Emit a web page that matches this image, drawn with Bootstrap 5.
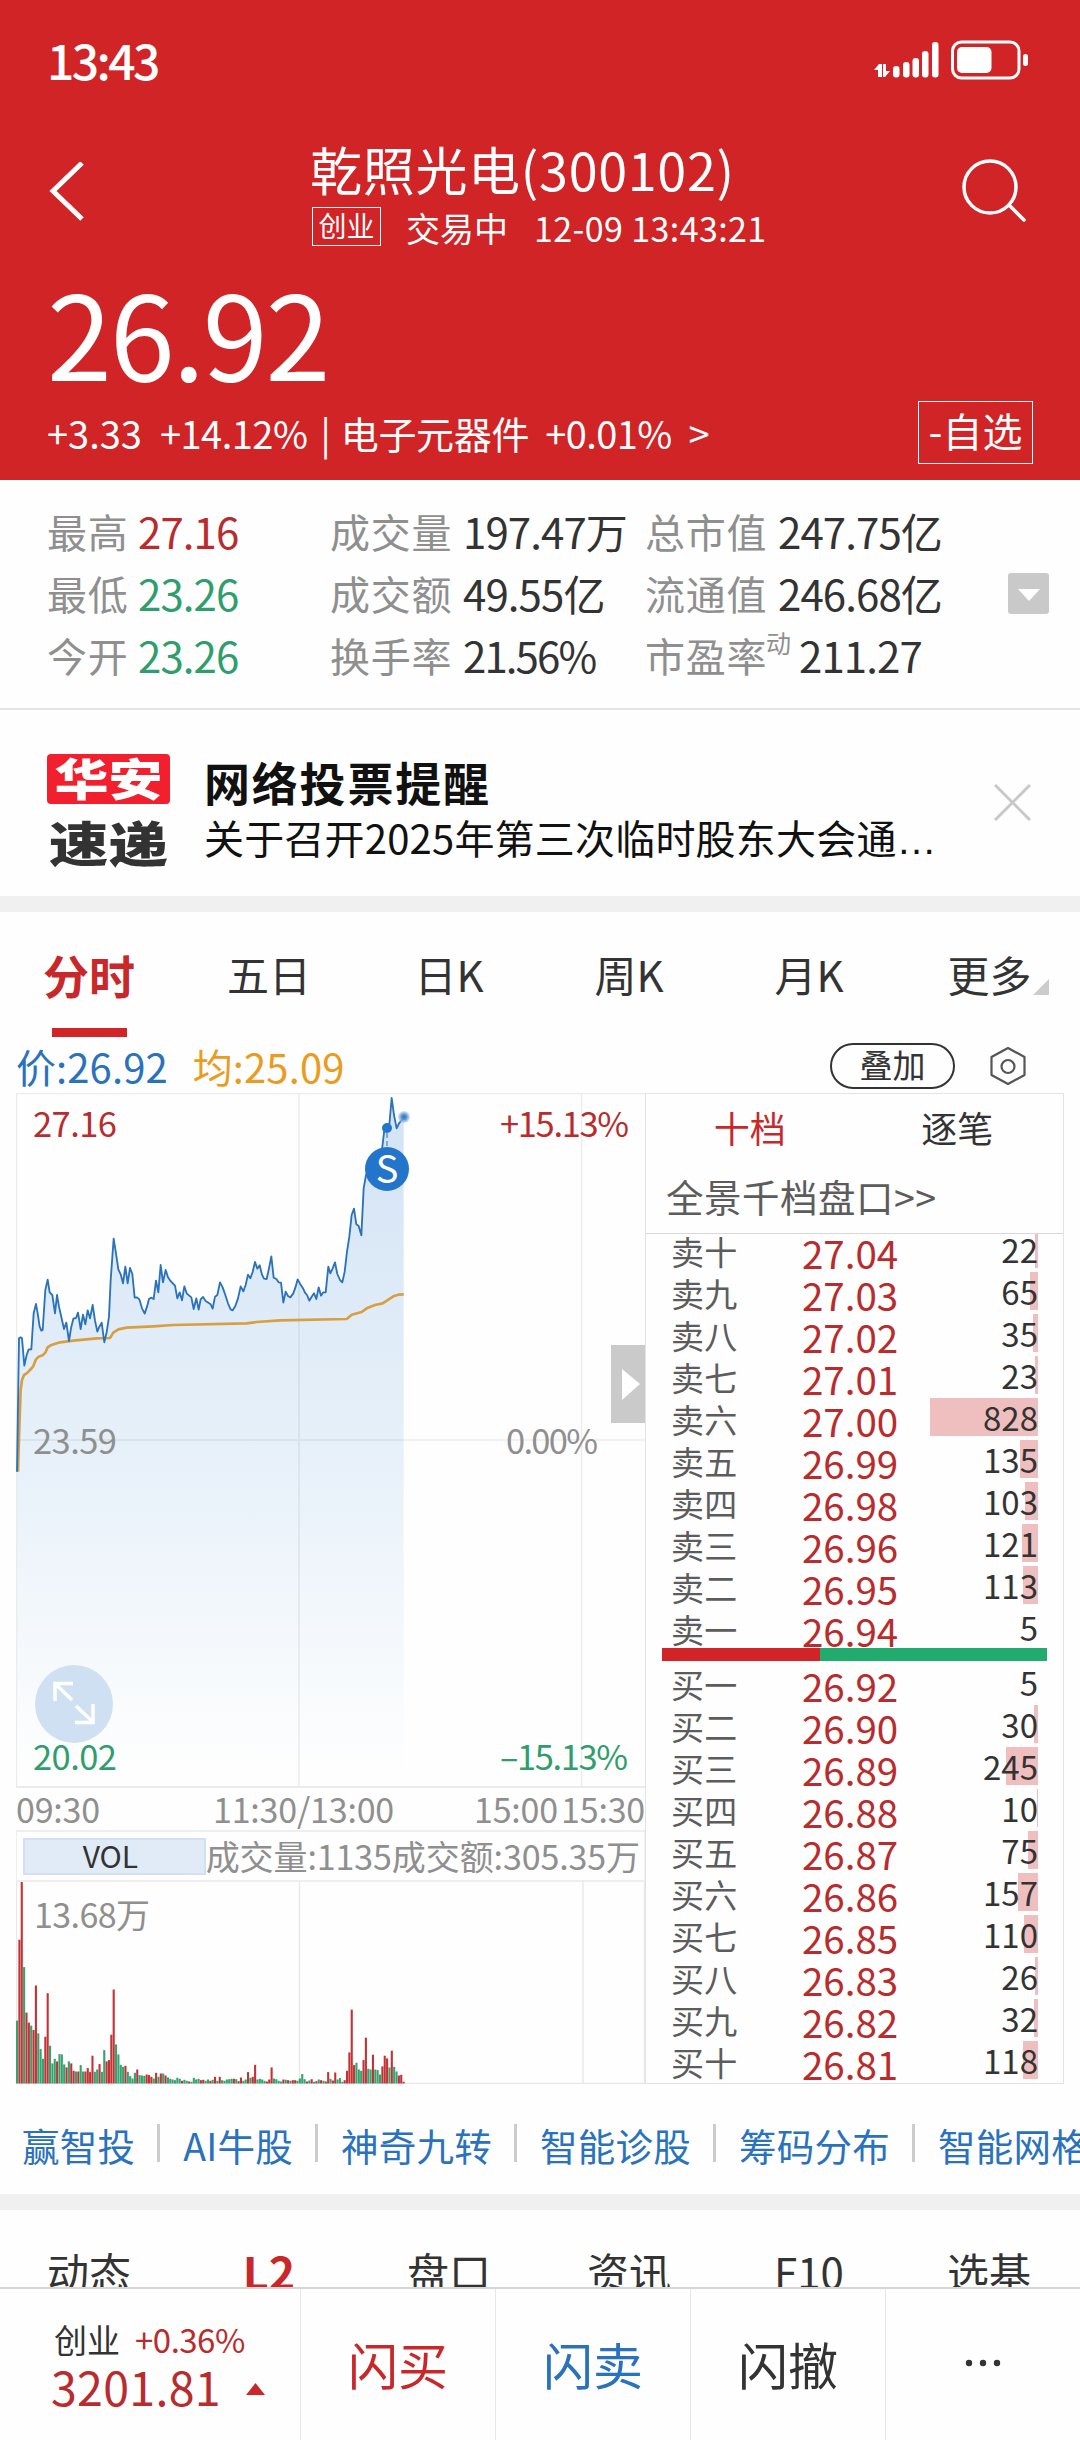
<!DOCTYPE html>
<html lang="zh-CN">
<head>
<meta charset="utf-8">
<meta name="viewport" content="width=device-width, initial-scale=1">
<title>乾照光电(300102)</title>
<link href="https://cdn.jsdelivr.net/npm/bootstrap@5.3.0/dist/css/bootstrap.min.css" rel="stylesheet">
<style>
:root{--up:#b92c2d;--brand:#d02426;--down:#2f9e6c;--ink:#333;--dim:#8f8f8f;--blue:#2a72bb}
body{font-family:"Noto Sans CJK SC",sans-serif;color:var(--ink);background:#fefefe;width:1080px;height:2440px;overflow:hidden;white-space:nowrap;line-height:1}
svg{display:block;flex:none}
svg text{font-family:"Noto Sans CJK SC",sans-serif}
.c-up{color:var(--up)}.c-down{color:var(--down)}.c-dim{color:var(--dim)}.c-blue{color:var(--blue)}.c-brand{color:#c9282b}
.quote-head{background:var(--brand);height:480px}
.status-row{height:116px;padding:1px 51px 0 47px}
.status-time{font-size:48px;letter-spacing:-2.6px;font-weight:500}
.title-row{height:148px;padding:22px 54px 0 48px}
.title-mid{margin-right:33px;margin-left:222px}
.stock-name{font-size:52px;line-height:62px;letter-spacing:.7px}
.stock-sub{font-size:34px;line-height:56px}
.board-tag{border:1.5px solid #fff;width:69px;height:39px;font-size:28px;line-height:34px;text-align:center;margin:7px 25px 0 2px}
.big-price{height:131px;line-height:132px;font-size:117px;letter-spacing:-2.2px;padding-left:47px}
.change-row{height:75px;font-size:38px;padding:0 47px}
.watch-btn{border:1.5px solid #fff;width:115px;height:63px;font-size:40px;line-height:57px;text-align:center;letter-spacing:0}
.stats{height:228px;padding:20px 0 0 47px;font-size:42px;letter-spacing:-.9px}
.stats .line{height:62px}
.stats .lab{font-size:40px;letter-spacing:.7px;color:var(--dim)}
.col-a .lab{width:91px}.col-b .lab,.col-c .lab{width:133px}
.col-a{width:283px}.col-b{width:315px}.col-c{width:363px}
.stats sup{font-size:25px;top:-19px;margin-left:-1px}
.drop-ico{margin-top:73px}
.rule{height:2px;background:#e5e5e5}
.band{height:16px;background:#f0f0f0}
.notice{height:186px;padding:44px 49px 0 47px}
.logo-a{background:#f2202e;color:#fff;width:123px;height:50px;border-radius:4px;line-height:46px}
.logo-b{color:var(--ink);line-height:48px;margin-top:13px}
.logo-a,.logo-b{font-weight:900;font-size:55px;text-align:center;width:123px}
.logo-a span{display:block;transform:scale(.98,.8)}
.logo-b span{display:block;transform:scale(1.08,.86)}
.n-title{font-size:46px;font-weight:700;color:#111;line-height:54px;letter-spacing:1.8px}
.n-text{font-size:40px;color:#111;line-height:54px;letter-spacing:.2px;margin-top:2px}
.n-text i{font-family:"Liberation Sans",sans-serif;font-style:normal}
.period{height:125px;font-size:42px}
.period .item{width:180px;padding-top:32px;padding-right:2px;line-height:60px}
.period .item.on{font-weight:700;font-size:46px;color:#c9282b}
.period .bar{width:75px;height:9px;background:var(--brand)}
.legend-row{height:56px;font-size:40px;padding:1px 53px 0 16px;letter-spacing:.1px}
.pill{width:125px;height:46px;border:2px solid #333;font-size:33px;line-height:39px;text-align:center;margin-right:34px}
.board{height:991px;padding:0 16px}
.left-col{width:629px}
.times{height:44px;font-size:34px;border-bottom:2px solid #eee;letter-spacing:-.2px}
.vol-row{height:50px;font-size:34px;border:1px solid #efefef;border-top:0;border-bottom:2px solid #eee;letter-spacing:-.1px;padding-left:6px}
.vol-chip{width:183px;height:37px;background:#e1ebf8;border:2px solid #d2e0f6;color:#333;font-size:30px;line-height:31px;padding-right:8px}
.handle{right:0;top:252px;width:34px;height:78px;background:#cacaca}
.depth{width:419px;border:1px solid #e3e3e3}
.depth-tabs{height:70px;font-size:36px;padding:0 2px 4px 0}
.depth-link{height:71px;font-size:37.5px;color:#5c5c5c;border-bottom:1px solid #d8d8d8;padding:0 0 0 20px;letter-spacing:.5px;line-height:63px}
.sells{height:416px}
.sells>div:first-child{margin-top:-4px}
.lvl{height:42px;padding:0 25px 0 25px}
.lvl .nm{font-size:33px;color:#5c5c5c;line-height:42px;width:131px;letter-spacing:.3px}
.lvl .px{font-size:38.5px;line-height:45px;color:var(--up)}
.lvl .qt{font-size:33px;line-height:39px;width:120px;height:38px;background:linear-gradient(#efbfc0,#efbfc0) right/var(--w) 100% no-repeat}
.balance{height:13px;margin:0 16px 2px 16px}
.balance-sell{width:158px;background:var(--brand)}.balance-buy{background:#22ab6e}
.tools{height:110px;font-size:37.5px;padding:7px 0 0 22px;letter-spacing:.25px}
.tools span{padding-top:5px}
.tools .sep{width:3px;height:38px;background:#ccc;margin:0 23px 0 22px;flex:none}
.sections{height:77px;font-size:42px}
.sections .item{width:180px;line-height:60px;padding-top:31px;padding-right:2px}
.sections .on{font-weight:700;font-size:45px;color:#c9282b}
.dock{height:153px;border-top:2px solid #d6d6d6;background:#fefefe;position:relative}
.dock .act{width:195px;border-left:1px solid #e6e6e6;font-size:50px;padding-bottom:4px}
.idx{width:300px;padding:30px 0 0 54px}
</style>
<script src="https://cdn.jsdelivr.net/npm/bootstrap@5.3.0/dist/js/bootstrap.bundle.min.js"></script>
</head>
<body>
<header class="quote-head text-white">
  <div class="status-row d-flex justify-content-between align-items-center">
    <span class="status-time">13:43</span>
    <svg width="156" height="42" viewBox="0 0 156 42" fill="#fff">
      <path d="M1 32l5-6h3v13H5v-7zM10 26h3v7h4l-5 6h-2z"/>
      <rect x="20" y="28" width="6.500" height="11.500" rx="3"/><rect x="30" y="24" width="6.500" height="15.500" rx="3"/><rect x="39.500" y="20" width="6.500" height="19.500" rx="3"/><rect x="49" y="13" width="6.500" height="26.500" rx="3"/><rect x="59" y="4" width="6.500" height="35.500" rx="3"/>
      <rect x="79.500" y="4" width="66.500" height="36" rx="9" fill="none" stroke="#fff" stroke-width="3"/>
      <rect x="84" y="9" width="34.500" height="26" rx="5"/><rect x="150" y="16" width="5" height="12" rx="2.500"/>
    </svg>
  </div>
  <div class="title-row d-flex align-items-start">
    <svg class="mt-4" width="40" height="60" viewBox="0 0 40 60" fill="none" stroke="#fff" stroke-width="5"><path d="M34 1L5 29l29 28"/></svg>
    <div class="title-mid">
      <div class="stock-name">乾照光电(300102)</div>
      <div class="stock-sub d-flex"><span class="board-tag">创业</span><span>交易中</span><span style="margin-left:26px;letter-spacing:.4px">12-09 13:43:21</span></div>
    </div>
    <svg class="ms-auto" style="margin-top:21px" width="66" height="66" viewBox="0 0 66 66" fill="none" stroke="#fff" stroke-width="3.500" stroke-linecap="round"><circle cx="30" cy="28" r="26"/><path d="M49 46l15 15"/></svg>
  </div>
  <div class="big-price">26.92</div>
  <div class="change-row d-flex justify-content-between align-items-center">
    <div class="d-flex"><span>+3.33</span><span style="margin-left:18px;letter-spacing:-.5px">+14.12%</span><span style="margin:0 10px 0 13px">|</span><span style="letter-spacing:-.3px">电子元器件</span><span style="margin-left:16px;letter-spacing:-.6px">+0.01%</span><span style="margin-left:17px">&gt;</span></div>
    <div class="watch-btn">-自选</div>
  </div>
</header>

<section class="stats d-flex align-items-start">
  <div class="col-a">
    <div class="line d-flex align-items-center"><span class="lab">最高</span><span class="c-up">27.16</span></div>
    <div class="line d-flex align-items-center"><span class="lab">最低</span><span class="c-down">23.26</span></div>
    <div class="line d-flex align-items-center"><span class="lab">今开</span><span class="c-down">23.26</span></div>
  </div>
  <div class="col-b">
    <div class="line d-flex align-items-center"><span class="lab">成交量</span><span>197.47万</span></div>
    <div class="line d-flex align-items-center"><span class="lab">成交额</span><span>49.55亿</span></div>
    <div class="line d-flex align-items-center"><span class="lab">换手率</span><span style="letter-spacing:-1.9px">21.56%</span></div>
  </div>
  <div class="col-c">
    <div class="line d-flex align-items-center"><span class="lab">总市值</span><span>247.75亿</span></div>
    <div class="line d-flex align-items-center"><span class="lab">流通值</span><span>246.68亿</span></div>
    <div class="line d-flex align-items-center"><span class="lab" style="width:154px">市盈率<sup>动</sup></span><span>211.27</span></div>
  </div>
  <svg class="drop-ico" width="41" height="41" viewBox="0 0 41 41"><rect width="41" height="41" rx="3" fill="#c9c9c9"/><path d="M10 16h22L21 28z" fill="#fff"/></svg>
</section>
<div class="rule"></div>
<section class="notice d-flex">
  <div><div class="logo-a"><span>华安</span></div><div class="logo-b"><span>速递</span></div></div>
  <div class="flex-grow-1" style="margin-left:34px">
    <div class="n-title">网络投票提醒</div>
    <div class="n-text">关于召开2025年第三次临时股东大会通<i>…</i></div>
  </div>
  <svg style="margin-top:30px" width="37" height="37" viewBox="0 0 37 37" stroke="#c8c8c8" stroke-width="3"><path d="M1 1l35 35M36 1L1 36"/></svg>
</section>
<div class="band"></div>

<nav class="period d-flex">
  <div class="item on d-flex flex-column align-items-center justify-content-between"><span>分时</span><div class="bar"></div></div>
  <div class="item text-center">五日</div>
  <div class="item text-center">日K</div>
  <div class="item text-center">周K</div>
  <div class="item text-center">月K</div>
  <div class="item d-flex justify-content-center" style="padding-left:18px">更多<svg style="margin:35px 0 0 1px" width="16" height="16" viewBox="0 0 16 16"><path d="M16 0v16H0z" fill="#ccc"/></svg></div>
</nav>
<div class="legend-row d-flex align-items-center">
  <span class="c-blue">价:26.92</span><span style="color:#e99c22;margin-left:25px">均:25.09</span>
  <span class="pill rounded-pill ms-auto">叠加</span>
  <svg width="38" height="42" viewBox="0 0 38 42" fill="none" stroke="#555" stroke-width="2.200"><path d="M19 3L35.500 12v18L19 39 2.500 30V12z" stroke-linejoin="round"/><circle cx="19" cy="21.500" r="6.500"/></svg>
</div>

<main class="board d-flex">
  <div class="left-col position-relative">
    <svg width="629" height="695" viewBox="0 0 629 695">
      <defs>
        <linearGradient id="fillg" gradientUnits="userSpaceOnUse" x1="0" y1="70" x2="0" y2="2086"><stop offset="0" stop-color="#d3e3f5"/><stop offset=".5" stop-color="#e6f0f9"/><stop offset="1" stop-color="#fefefe"/></linearGradient>
        <radialGradient id="glow"><stop offset="0" stop-color="#2a72bb"/><stop offset=".45" stop-color="#5d97d4"/><stop offset="1" stop-color="#a9c9ec" stop-opacity=".5"/></radialGradient>
      </defs>
      <path id="area" fill="url(#fillg)" transform="translate(-16 -13) scale(.33333)"/>
      <path d="M0 .5H629M.5 0V694M283 0V694M565.500 0V694M0 347H629" stroke="#000" stroke-opacity=".07" stroke-width="1.500" fill="none"/>
      <path d="M0 694H629" stroke="#ebebeb" stroke-width="2"/>
      <g transform="translate(-16 -13) scale(.33333)" fill="none" stroke-linejoin="round">
        <polyline id="avg" stroke="#d79f42" stroke-width="8"/>
        <polyline id="price" stroke="#2a72bb" stroke-width="5.500"/>
      </g>
      <circle cx="388" cy="24" r="6" fill="url(#glow)"/><circle cx="371" cy="35" r="5" fill="#2375cb"/>
      <path d="M371 40v16" stroke="#7aa9dc" stroke-width="2" stroke-dasharray="5 3"/>
      <circle cx="371" cy="76" r="22" fill="#2375cb"/><text x="371" y="89.500" font-size="38" fill="#fff" text-anchor="middle">S</text>
      <g font-size="34.500">
        <text x="17" y="44" textLength="84" fill="#b92c2d">27.16</text>
        <text x="613" y="44" textLength="129" text-anchor="end" fill="#b92c2d">+15.13%</text>
        <text x="17" y="361" textLength="84" fill="#8f8f8f">23.59</text>
        <text x="582" y="361" textLength="92" text-anchor="end" fill="#8f8f8f">0.00%</text>
        <text x="17" y="677" textLength="84" fill="#2f9e6c">20.02</text>
        <text x="612" y="677" textLength="128" text-anchor="end" fill="#2f9e6c">–15.13%</text>
      </g>
      <circle cx="58" cy="611" r="39" fill="#cfe0f3"/>
      <g fill="none" stroke="#fff" stroke-width="3.500"><path d="M39 608V590.500H57M39 590.500L56 607M60 613L77 629M77 611V629.500H59"/></g>
    </svg>
    <div class="handle position-absolute"><svg width="34" height="78" viewBox="0 0 34 78"><path d="M11 24l18 15-18 16z" fill="#fff"/></svg></div>
    <div class="times d-flex align-items-center c-dim"><span style="width:197px">09:30</span><span style="width:261px">11:30/13:00</span><span>15:00</span><span class="ms-auto">15:30</span></div>
    <div class="vol-row d-flex align-items-center c-dim"><span class="vol-chip text-center">VOL</span><span>成交量:1135</span><span class="ms-auto me-1">成交额:305.35万</span></div>
    <svg width="629" height="202" viewBox="0 0 629 202">
      <path d="M.5 0V202M283.500 0V202M567 0V202M628.500 0V202M0 201.500H629" stroke="#e9e9e9" stroke-width="1.500"/>
      <g id="vol"></g>
      <text x="18" y="46" font-size="34" fill="#8f8f8f" textLength="116">13.68万</text>
    </svg>
  </div>
  <div class="depth d-flex flex-column">
    <div class="depth-tabs d-flex align-items-center"><span class="w-50 text-center c-brand">十档</span><span class="w-50 text-center">逐笔</span></div>
    <div class="depth-link">全景千档盘口&gt;&gt;</div>
    <div class="sells overflow-hidden" id="sells"></div>
    <div class="balance d-flex"><div class="balance-sell"></div><div class="balance-buy flex-grow-1"></div></div>
    <div id="buys"></div>
  </div>
</main>

<div class="tools d-flex align-items-center c-blue overflow-hidden">
  <span>赢智投</span><i class="sep"></i><span>AI牛股</span><i class="sep"></i><span>神奇九转</span><i class="sep"></i><span>智能诊股</span><i class="sep"></i><span>筹码分布</span><i class="sep"></i><span>智能网格</span>
</div>
<div class="band"></div>
<nav class="sections d-flex overflow-hidden text-center">
  <div class="item">动态</div><div class="item on">L2</div><div class="item">盘口</div><div class="item">资讯</div><div class="item">F10</div><div class="item">选基</div>
</nav>
<footer class="dock d-flex">
  <div class="idx">
    <div class="d-flex align-items-center" style="font-size:33px;line-height:40px"><span>创业</span><span class="c-up" style="margin-left:15px;letter-spacing:-.5px">+0.36%</span></div>
    <div class="d-flex align-items-center c-up" style="font-size:46.500px;line-height:54px;letter-spacing:.3px;margin-left:-3px">3201.81<svg style="margin:5px 0 0 25px" width="19" height="12" viewBox="0 0 19 12"><path d="M9.500 0L19 12H0z" fill="#c9282b"/></svg></div>
  </div>
  <div class="act d-flex align-items-center justify-content-center c-brand">闪买</div>
  <div class="act d-flex align-items-center justify-content-center c-blue">闪卖</div>
  <div class="act d-flex align-items-center justify-content-center">闪撤</div>
  <div class="act d-flex align-items-center justify-content-center"><svg width="36" height="8" viewBox="0 0 36 8" fill="#333"><circle cx="4" cy="4" r="3.200"/><circle cx="18" cy="4" r="3.200"/><circle cx="32" cy="4" r="3.200"/></svg></div>
</footer>

<script>
// Minute prices and running average, three units to a pixel
const price="51,1175 57,775 62,772 66,775 73,857 80,825 86,808 94,808 97,760 101,700 108,672 113,700 119,740 124,752 128,750 136,630 143,599 149,637 157,645 165,700 171,645 177,680 186,720 192,747 199,728 207,783 213,745 220,716 228,714 234,698 242,747 249,704 256,733 263,691 270,715 278,675 285,722 292,755 298,740 305,728 313,787 320,757 327,710 332,600 341,476 348,520 355,568 362,583 369,610 376,560 383,610 390,564 397,582 404,653 411,652 418,658 426,685 434,701 441,680 447,657 453,653 461,657 468,602 475,637 482,555 489,607 497,570 504,592 510,601 525,617 532,655 539,637 546,661 553,619 560,640 574,652 581,687 589,655 596,689 602,658 609,651 617,663 632,673 638,686 645,650 652,645 660,607 668,622 676,645 684,670 692,688 698,691 706,678 714,655 722,619 730,634 737,615 744,584 751,595 758,576 765,546 772,566 779,556 786,584 792,596 800,597 807,565 814,529 821,593 829,597 836,607 843,608 850,668 857,635 864,648 871,652 880,640 887,620 893,598 900,611 908,623 915,638 921,645 928,662 935,650 942,640 949,657 956,622 963,647 970,637 977,637 985,560 991,580 998,565 1005,547 1012,582 1020,600 1027,607 1034,575 1041,515 1048,470 1055,405 1062,386 1069,433 1076,438 1084,466 1091,325 1098,285 1110,270 1140,240 1147,200 1153,150 1160,143 1168,135 1175,54 1182,105 1190,145 1197,130 1204,122 1211,112";
const avg="54,1175 58,1040 62,930 66,900 72,885 80,880 90,870 99,860 108,838 116,830 128,826 136,818 143,802 152,796 180,787 220,782 290,775 330,774 340,758 355,748 380,743 460,739 520,735 740,730 770,726 840,721 1040,717 1055,704 1085,696 1100,685 1125,675 1148,670 1180,649 1195,644 1211,643";
document.getElementById("price").setAttribute("points",price);
document.getElementById("avg").setAttribute("points",avg);
document.getElementById("area").setAttribute("d","M"+price+" L1211,2086 51,2086Z");

// Minute volumes: bar height and direction
const vol="188g 430r 603r 348g 212r 182r 173g 160r 293r 150g 103g 74g 140r 270r 113g 60g 74g 66r 88g 87g 57g 48r 66g 60r 38r 36g 36r 55g 36g 36r 46r 34r 83r 35g 42g 58r 35g 100g 66r 70r 146r 281r 117g 87g 56g 50g 53r 35g 22g 15g 32g 42r 25g 24g 23g 27r 25r 20r 15g 32r 20g 30r 30g 24r 18g 14g 12g 10g 17g 14g 8r 11g 8g 6r 5g 17g 12g 14g 10r 11r 8g 12g 8r 11g 20r 8g 20r 10g 8g 12g 13g 14g 14r 13g 7r 18r 8g 12g 34r 17g 20r 56r 12g 14g 12g 8g 6r 12r 48r 15g 13g 8g 6g 12r 11g 10r 8g 10r 10r 8g 15g 28g 13g 6r 9g 13r 5g 7r 12g 10r 8g 6r 34r 14g 9r 33r 12g 16g 5g 10r 38r 93r 221r 55r 62g 42g 38g 70r 137r 44g 42g 86r 42g 40g 27g 51r 83r 75r 48g 98r 50g 36g 24r 26r 5r".split(" ");
document.getElementById("vol").innerHTML=vol.map((v,i)=>{
  const h=parseInt(v)/2.99;
  return `<rect x="${(i*2.357).toFixed(2)}" y="${(201.5-h).toFixed(1)}" width="2.1" height="${h.toFixed(1)}" fill="${v.endsWith("r")?"#c23335":"#35a270"}"/>`;
}).join("");

const num="一二三四五六七八九十";
const row=(side,k,p,q)=>`<div class="lvl d-flex align-items-start"><span class="nm">${side}${num[k]}</span><span class="px">${p}</span><span class="qt text-end ms-auto" style="--w:${q<8?0:Math.round(q*.1305)}px">${q}</span></div>`;
const sells=[["27.04",22],["27.03",65],["27.02",35],["27.01",23],["27.00",828],["26.99",135],["26.98",103],["26.96",121],["26.95",113],["26.94",5]];
const buys=[["26.92",5],["26.90",30],["26.89",245],["26.88",10],["26.87",75],["26.86",157],["26.85",110],["26.83",26],["26.82",32],["26.81",118]];
document.getElementById("sells").innerHTML=sells.map((r,i)=>row("卖",9-i,...r)).join("");
document.getElementById("buys").innerHTML=buys.map((r,i)=>row("买",i,...r)).join("");
</script>
</body>
</html>
